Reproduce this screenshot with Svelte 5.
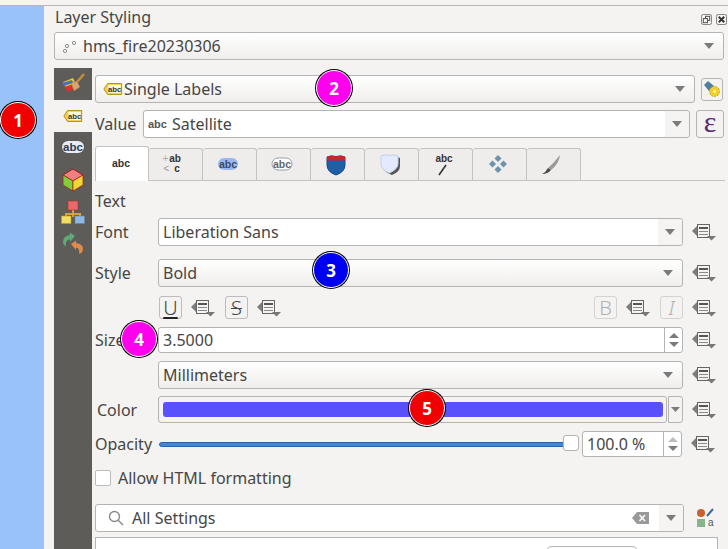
<script>
  const tabs = ['text', 'format', 'buffer', 'mask', 'background', 'shadow', 'callout', 'placement', 'rendering'];
  const badges = [
    { n: 1, x: 18, y: 120, color: '#f00000' },
    { n: 2, x: 334, y: 88, color: '#ff00ee' },
    { n: 3, x: 331, y: 270, color: '#0000f0' },
    { n: 4, x: 139, y: 339, color: '#ff00ee' },
    { n: 5, x: 427, y: 408, color: '#f00000' }
  ];
</script>

{#snippet dd()}
  <svg class="dd" width="24" height="18" viewBox="0 0 24 18">
    <path d="M0 8 L6 2 V14 Z" fill="#7d7d7d" />
    <rect x="5.5" y="1.5" width="12" height="13" fill="#f4f3f1" stroke="#666" />
    <rect x="7" y="4" width="9" height="2" fill="#555" />
    <path d="M7 8.5 H16 M7 11.5 H16" stroke="#8a8a8a" />
    <path d="M15 13 H24 L19.5 17.5 Z" fill="#777" />
  </svg>
{/snippet}

{#snippet arrow()}
  <svg class="arrow" width="10" height="6" viewBox="0 0 10 6"><path d="M0 0 H10 L5 6 Z" fill="#7b7b7b" /></svg>
{/snippet}

{#snippet tag()}
  <svg width="20" height="14" viewBox="0 0 22 15">
    <path d="M5 1.5 H20.5 V13.5 H5 L1 7.5 Z" fill="#f3d34a" stroke="#a98a10" />
    <rect x="6" y="3" width="13.5" height="9" fill="#fff8d8" />
    <text x="12.7" y="10.5" class="ic-abc" font-size="8.5">abc</text>
  </svg>
{/snippet}

{#snippet tabIcon(name)}
  <svg width="30" height="26" viewBox="0 0 30 26">
    {#if name === 'text'}
      <text x="15" y="17" class="ic-abc" font-size="10.5">abc</text>
    {:else if name === 'format'}
      <text x="3.5" y="11" fill="#aaa" font-size="10" font-family="Liberation Sans">+</text>
      <text x="16" y="11" class="ic-abc" font-size="10">ab</text>
      <text x="4.5" y="21" fill="#999" font-size="10" font-family="Liberation Sans">&lt;</text>
      <text x="18" y="21" class="ic-abc" font-size="10">c</text>
    {:else if name === 'buffer'}
      <rect x="5" y="7" width="20" height="12" rx="6" fill="#9db8f0" />
      <text x="15" y="17" class="ic-abc" font-size="10.5" style="fill:#3b4a66">abc</text>
    {:else if name === 'mask'}
      <rect x="5" y="7" width="20" height="12" rx="6" fill="#fff" stroke="#9a9fae" />
      <text x="15" y="17" class="ic-abc" font-size="10.5" style="fill:#666">abc</text>
    {:else if name === 'background'}
      <path d="M6 6 Q10 4 15 5.5 Q20 4 24 6 V14 Q24 21 15 24 Q6 21 6 14 Z" fill="#1f5fa8" stroke="#174a85" />
      <path d="M6 6 Q10 4 15 5.5 Q20 4 24 6 V9.5 H6 Z" fill="#d42027" />
    {:else if name === 'shadow'}
      <path d="M8 7 Q12 5 16 6.5 Q20 5 25 7 V15 Q25 21 17 24 Q8 21 8 15 Z" fill="#555" />
      <path d="M6 5 Q10 3 14.5 4.5 Q19 3 23 5 V13 Q23 18 14.5 22 Q6 19 6 13 Z" fill="#e4eaff" stroke="#c4cfee" />
    {:else if name === 'callout'}
      <text x="15" y="11" class="ic-abc" font-size="10">abc</text>
      <path d="M17 14 L10 24" stroke="#333" stroke-width="1.6" />
    {:else if name === 'placement'}
      <g fill="#6b93ad">
        <path d="M15 4 L18.5 7.5 L15 11 L11.5 7.5 Z" />
        <path d="M15 15 L18.5 18.5 L15 22 L11.5 18.5 Z" />
        <path d="M9.5 9.5 L13 13 L9.5 16.5 L6 13 Z" />
        <path d="M20.5 9.5 L24 13 L20.5 16.5 L17 13 Z" />
      </g>
    {:else}
      <path d="M23 4 Q22 13 14 19 L11 17 Q17 12 23 4 Z" fill="#9a9a9a" />
      <path d="M11 17 L14 19 Q11 23 5 23 Q9 21 11 17 Z" fill="#4a4a4a" />
    {/if}
  </svg>
{/snippet}

<div class="top"></div>
<div class="shell">
  <div class="blue"></div>
  <div class="dock">
    <div class="head">
      <span>Layer Styling</span>
      <div class="winbtns">
        <svg width="11" height="11" viewBox="0 0 12 12"><rect x=".5" y=".5" width="11" height="11" rx="2" fill="none" stroke="#777" /><rect x="5" y="2.5" width="4.5" height="4.5" fill="none" stroke="#444" /><rect x="2.5" y="5" width="4.5" height="4.5" fill="#f4f3f1" stroke="#444" /></svg>
        <svg width="11" height="11" viewBox="0 0 12 12"><rect x=".5" y=".5" width="11" height="11" rx="2" fill="none" stroke="#777" /><path d="M3 3 L9 9 M9 3 L3 9" stroke="#333" stroke-width="2" /></svg>
      </div>
    </div>

    <div class="combo layer">
      <svg width="16" height="16" viewBox="0 0 16 16" fill="#fff" stroke="#8a8a8a"><circle cx="3" cy="13" r="1.6" /><circle cx="5" cy="8" r="1.6" /><circle cx="12" cy="5" r="1.6" /></svg>
      <span>hms_fire20230306</span>
      <span class="grow"></span>
      {@render arrow()}
    </div>

    <div class="body">
      <div class="side">
        <div class="sideitem">
          <svg width="24" height="24" viewBox="0 0 24 24">
            <path d="M2 10 L12 6 L15 12 L5 16 Z" fill="#e8c832" />
            <path d="M1 11 L11 8 L12 11 L3 14 Z" fill="#4a6fc0" />
            <path d="M3 15 L13 12 L15 16 L7 20 Z" fill="#d8342c" />
            <path d="M10 11 L16 9 L19 15 L13 19 Z" fill="#d6a774" stroke="#96703f" stroke-width=".6" />
            <path d="M16 10 L23 2" stroke="#c98f2e" stroke-width="2.4" />
          </svg>
        </div>
        <div class="sideitem on">{@render tag()}</div>
        <div class="sideitem">
          <svg width="24" height="16" viewBox="0 0 24 16">
            <rect x="1" y="2" width="22" height="12" rx="6" fill="#e8ecf8" />
            <text x="12" y="12" class="ic-abc" font-size="11.5" style="fill:#2d3a52">abc</text>
          </svg>
        </div>
        <div class="sideitem">
          <svg width="22" height="24" viewBox="0 0 22 24">
            <path d="M11 1 L21 7 L11 13 L1 7 Z" fill="#f08080" stroke="#a81818" />
            <path d="M1 7 L11 13 V23 L1 17 Z" fill="#7fd038" stroke="#a81818" stroke-width=".7" />
            <path d="M21 7 L11 13 V23 L21 17 Z" fill="#f2d635" stroke="#a81818" stroke-width=".7" />
          </svg>
        </div>
        <div class="sideitem">
          <svg width="24" height="24" viewBox="0 0 24 24">
            <path d="M12 10 V15 M5 17 V14 H19 V17 M12 14 V17" stroke="#d8a040" stroke-width="2" fill="none" />
            <rect x="7" y="1" width="10" height="9" fill="#e86a6a" stroke="#b03030" stroke-width=".6" />
            <rect x="0.5" y="16" width="9.5" height="7.5" fill="#f3dc66" stroke="#b89a20" stroke-width=".6" />
            <rect x="14" y="16" width="9.5" height="7.5" fill="#90b8e0" stroke="#6088b0" stroke-width=".6" />
          </svg>
        </div>
        <div class="sideitem">
          <svg width="22" height="22" viewBox="0 0 22 22">
            <path d="M13 4 L8 0.5 V3 Q1 4 1 10 Q1 13 4 14 Q3 8 8 7.5 V10 Z" fill="#62a878" />
            <path d="M9 12 L14 8.5 V11 Q21 12 21 17 Q21 21 17 22 Q18 16 14 15.5 V18 Z" fill="#e08a4a" />
          </svg>
        </div>
      </div>

      <div class="main">
        <div class="row">
          <div class="combo mode">
            {@render tag()}
            <span>Single Labels</span>
            <span class="grow"></span>
            {@render arrow()}
          </div>
          <button class="tool" aria-label="Rule settings">
            <svg width="18" height="18" viewBox="0 0 18 18">
              <path d="M5 1 L11 6 L6 11 L1 5 Z" fill="#4f7fa0" />
              <circle cx="11.5" cy="11.5" r="5" fill="#f1cf2d" stroke="#caa418" stroke-dasharray="2 1" />
              <circle cx="11.5" cy="11.5" r="1.6" fill="#fff1a0" />
            </svg>
          </button>
        </div>

        <div class="row value">
          <span class="vlabel">Value</span>
          <div class="field vfield">
            <span class="abc">abc</span>
            <span>Satellite</span>
            <span class="grow"></span>
            <span class="dropseg">{@render arrow()}</span>
          </div>
          <button class="tool eps">ε</button>
        </div>

        <div class="tabs">
          {#each tabs as t, i}
            <div class="tab" class:active={i === 0}>{@render tabIcon(t)}</div>
          {/each}
        </div>

        <div class="heading">Text</div>

        <div class="frow font">
          <span class="lbl">Font</span>
          <div class="field ctl h28"><span>Liberation Sans</span><span class="grow"></span><span class="dropseg">{@render arrow()}</span></div>
          {@render dd()}
        </div>

        <div class="frow style">
          <span class="lbl">Style</span>
          <div class="combo ctl h28"><span>Bold</span><span class="grow"></span>{@render arrow()}</div>
          {@render dd()}
        </div>

        <div class="frow fmt">
          <span class="lbl"></span>
          <button class="fbtn u"><span>U</span></button>
          {@render dd()}
          <button class="fbtn s">S</button>
          {@render dd()}
          <span class="grow"></span>
          <button class="fbtn off">B</button>
          {@render dd()}
          <button class="fbtn off it">I</button>
          {@render dd()}
        </div>

        <div class="frow size">
          <span class="lbl">Size</span>
          <div class="field ctl h26">
            <span>3.5000</span><span class="grow"></span>
            <span class="spin">
              <svg width="10" height="5" viewBox="0 0 10 5"><path d="M0 5 H10 L5 0 Z" fill="#7b7b7b" /></svg>
              <svg width="10" height="5" viewBox="0 0 10 5"><path d="M0 0 H10 L5 5 Z" fill="#7b7b7b" /></svg>
            </span>
          </div>
          {@render dd()}
        </div>

        <div class="frow unit">
          <span class="lbl"></span>
          <div class="combo ctl h28"><span>Millimeters</span><span class="grow"></span>{@render arrow()}</div>
          {@render dd()}
        </div>

        <div class="frow color">
          <span class="lbl colorlbl">Color</span>
          <div class="colorbtn"><div class="swatch"></div></div>
          <div class="colordrop"><svg width="9" height="5" viewBox="0 0 9 5"><path d="M0 0 H9 L4.5 5 Z" fill="#7b7b7b" /></svg></div>
          {@render dd()}
        </div>

        <div class="frow opacity">
          <span class="lbl">Opacity</span>
          <div class="slider"><div class="track"></div><div class="handle"></div></div>
          <div class="field pct">
            <span>100.0 %</span><span class="grow"></span>
            <span class="spin">
              <svg width="10" height="5" viewBox="0 0 10 5"><path d="M0 5 H10 L5 0 Z" fill="#bdbdbd" /></svg>
              <svg width="10" height="5" viewBox="0 0 10 5"><path d="M0 0 H10 L5 5 Z" fill="#7b7b7b" /></svg>
            </span>
          </div>
          {@render dd()}
        </div>

        <div class="check">
          <span class="box"></span>
          <span>Allow HTML formatting</span>
        </div>

        <div class="row search">
          <div class="field sfield">
            <svg width="16" height="16" viewBox="0 0 16 16" fill="none" stroke="#8a8a8a" stroke-width="1.4"><circle cx="6.5" cy="6.5" r="5" /><path d="M10.2 10.2 L15 15" /></svg>
            <span>All Settings</span>
            <span class="grow"></span>
            <svg class="clear" width="17" height="12" viewBox="0 0 17 12"><path d="M0 6 L5 0 H17 V12 H5 Z" fill="#9a9a9a" /><path d="M7.5 3 L13 9 M13 3 L7.5 9" stroke="#fff" stroke-width="1.5" /></svg>
            <span class="dropseg">{@render arrow()}</span>
          </div>
          <svg class="styleic" width="20" height="22" viewBox="0 0 20 22">
            <circle cx="6" cy="6" r="4" fill="#c9622c" />
            <path d="M12 9 L18 2" stroke="#3e6a9e" stroke-width="2" />
            <rect x="2" y="12" width="8" height="8" fill="#88b48c" />
            <text x="13" y="19" fill="#555" font-size="10" font-family="Liberation Sans">a</text>
          </svg>
        </div>

        <div class="bottombox"><div class="pill"></div></div>
      </div>
    </div>
  </div>
</div>

{#each badges as b}
  <div class="badge" style="left:{b.x - 18}px;top:{b.y - 18}px;background:{b.color}">{b.n}</div>
{/each}

<style>
  :global(body) {
    margin: 0;
    background: #f4f3f1;
    overflow: hidden;
    font-family: 'Noto Sans', 'Open Sans', sans-serif;
    font-size: 16px;
    color: #464646;
  }

  .top {
    height: 5px;
    border-bottom: 1px solid #b8b7b5;
  }

  .shell {
    display: flex;
    height: 543px;
    overflow: hidden;
  }

  .blue {
    width: 44px;
    flex: none;
    background: #99c2fb;
  }

  .dock {
    flex: 1;
    padding-left: 10px;
    min-width: 0;
  }

  .head {
    height: 26px;
    display: flex;
    align-items: center;
    justify-content: space-between;
    padding: 0 1px 4px 1px;
    box-sizing: border-box;
  }

  .winbtns {
    display: flex;
    gap: 4px;
    margin-top: 4px;
  }

  .combo,
  .field {
    display: flex;
    align-items: center;
    box-sizing: border-box;
    border: 1px solid #b5b4b2;
    border-radius: 3px;
    padding-left: 7px;
    gap: 5px;
  }

  .combo {
    background: linear-gradient(#fff, #efeeec);
    padding-right: 9px;
  }

  .field {
    background: #fff;
  }

  .grow {
    flex: 1;
  }

  .arrow {
    flex: none;
  }

  .dropseg {
    align-self: stretch;
    display: flex;
    align-items: center;
    justify-content: center;
    width: 24px;
    background: #f5f4f2;
    border-radius: 0 3px 3px 0;
  }

  .layer {
    width: 670px;
    height: 28px;
  }

  .body {
    display: flex;
    margin-top: 8px;
  }

  .side {
    width: 38px;
    flex: none;
    height: 481px;
    background: #5d5c58;
  }

  .sideitem {
    display: flex;
    align-items: center;
    justify-content: center;
  }

  .sideitem:nth-child(1) {
    height: 32px;
  }

  .sideitem.on {
    height: 32px;
    background: #f4f3f1;
  }

  .sideitem:nth-child(3) {
    height: 30px;
  }

  .sideitem:nth-child(4) {
    height: 36px;
  }

  .sideitem:nth-child(5) {
    height: 28px;
  }

  .sideitem:nth-child(6) {
    height: 34px;
  }

  .main {
    padding: 7px 0 0 3px;
    width: 633px;
    box-sizing: border-box;
  }

  .row {
    display: flex;
    align-items: center;
  }

  .mode {
    width: 600px;
    height: 28px;
    gap: 1px;
  }

  .tool {
    margin-left: 6px;
    width: 22px;
    height: 23px;
    padding: 0;
    display: flex;
    align-items: center;
    justify-content: center;
    background: #f4f3f1;
    border: 1px solid #b5b4b2;
    border-radius: 3px;
  }

  .value {
    margin-top: 7px;
  }

  .vlabel {
    width: 48px;
  }

  .vfield {
    width: 547px;
    height: 28px;
    padding-left: 4px;
  }

  .abc {
    font-family: 'Liberation Sans', sans-serif;
    font-weight: 700;
    font-size: 11px;
    color: #555;
  }

  .eps {
    width: 28px;
    height: 28px;
    margin-left: 6px;
    font-family: 'Liberation Serif', serif;
    font-size: 30px;
    color: #5b2a72;
    line-height: 22px;
    padding-bottom: 4px;
  }

  .tabs {
    display: flex;
    margin-top: 8px;
    height: 34px;
    border-bottom: 1px solid #c4c3c1;
    box-sizing: content-box;
  }

  .tab {
    width: 54px;
    height: 32px;
    margin-top: 2px;
    padding: 0 3px 2px 0;
    box-sizing: border-box;
    background: #eeedeb;
    border: 1px solid #c4c3c1;
    border-left: 0;
    border-bottom: 0;
    border-radius: 3px 3px 0 0;
    display: flex;
    align-items: center;
    justify-content: center;
  }

  .tab.active {
    height: 35px;
    margin-top: 0;
    padding-bottom: 3px;
    background: #fff;
    border-left: 1px solid #c4c3c1;
    z-index: 1;
  }

  .ic-abc {
    font-family: 'Liberation Sans', sans-serif;
    font-weight: 700;
    text-anchor: middle;
    fill: #333;
  }

  .heading {
    height: 37px;
    display: flex;
    align-items: center;
    padding-top: 2px;
    box-sizing: border-box;
  }

  .frow {
    display: flex;
    align-items: center;
  }

  .lbl {
    width: 63px;
    flex: none;
  }

  .ctl {
    width: 525px;
    flex: none;
  }

  .h28 {
    height: 28px;
    padding-left: 4px;
  }

  .h26 {
    height: 26px;
    padding-left: 4px;
  }

  .dd {
    flex: none;
    margin-left: 9px;
  }

  .style {
    margin-top: 13px;
  }

  .fmt {
    margin-top: 9px;
    height: 23px;
    width: 621px;
  }

  .fbtn {
    width: 23px;
    height: 23px;
    padding: 0;
    box-sizing: border-box;
    flex: none;
    background: #f4f3f1;
    border: 1px solid #bdbcba;
    border-radius: 3px;
    font-family: 'Noto Sans', sans-serif;
    font-size: 20px;
    font-weight: 300;
    color: #464646;
    line-height: 1;
  }

  .fbtn.u {
    margin-left: 1px;
  }

  .fbtn.u span {
    text-decoration: underline;
    text-decoration-thickness: 2px;
    text-underline-offset: 2px;
    text-decoration-color: #222;
  }

  .fbtn.s {
    margin-left: 10px;
    text-decoration: line-through;
    text-decoration-thickness: 1px;
  }

  .fbtn.off {
    color: #b0b0b0;
    border-color: #d4d3d1;
    margin-left: 10px;
  }

  .fbtn.it {
    font-style: italic;
  }

  .size {
    margin-top: 8px;
  }

  .spin {
    align-self: stretch;
    width: 18px;
    box-sizing: border-box;
    border-left: 1px solid #b5b4b2;
    display: flex;
    flex-direction: column;
    align-items: center;
    justify-content: center;
    gap: 4px;
  }

  .unit {
    margin-top: 8px;
  }

  .color {
    margin-top: 7px;
  }

  .colorlbl {
    padding-left: 2px;
    box-sizing: border-box;
  }

  .colorbtn {
    width: 509px;
    height: 27px;
    flex: none;
    box-sizing: border-box;
    border: 1px solid #b5b4b2;
    border-radius: 3px;
    background: #f4f3f1;
    padding: 5px 3px 5px 4px;
  }

  .swatch {
    height: 100%;
    background: #5a50fb;
    border-radius: 3px;
  }

  .colordrop {
    width: 15px;
    height: 27px;
    margin-left: 1px;
    flex: none;
    box-sizing: border-box;
    border: 1px solid #b5b4b2;
    border-radius: 0 3px 3px 0;
    display: flex;
    align-items: center;
    justify-content: center;
  }

  .opacity {
    margin-top: 8px;
  }

  .slider {
    position: relative;
    width: 420px;
    margin-left: 1px;
    height: 26px;
    flex: none;
    display: flex;
    align-items: center;
  }

  .track {
    width: 100%;
    height: 5px;
    background: #3f87dd;
    border: 1px solid #2c62a8;
    border-radius: 3px;
    box-sizing: border-box;
  }

  .handle {
    position: absolute;
    right: 0;
    top: 4px;
    width: 16px;
    height: 16px;
    background: #fff;
    border: 1px solid #b5b4b2;
    border-radius: 3px;
    box-sizing: border-box;
  }

  .pct {
    width: 100px;
    height: 26px;
    margin-left: 3px;
    padding-left: 4px;
    flex: none;
  }

  .check {
    display: flex;
    align-items: center;
    gap: 7px;
    margin-top: 12px;
    height: 18px;
  }

  .box {
    width: 16px;
    height: 16px;
    background: #fff;
    border: 1px solid #bdbcba;
    border-radius: 2px;
    box-sizing: border-box;
  }

  .search {
    margin-top: 17px;
  }

  .sfield {
    width: 589px;
    height: 28px;
    padding-left: 12px;
    gap: 8px;
  }

  .clear {
    margin-right: 2px;
  }

  .styleic {
    margin-left: 11px;
  }

  .bottombox {
    margin-top: 5px;
    width: 623px;
    height: 30px;
    border: 1px solid #b5b4b2;
    background: #fff;
    box-sizing: border-box;
    padding: 8px 0 0 451px;
  }

  .pill {
    width: 90px;
    height: 24px;
    border: 1px solid #b5b4b2;
    border-radius: 4px;
    box-sizing: border-box;
  }

  .badge {
    position: absolute;
    width: 36px;
    height: 36px;
    box-sizing: border-box;
    border-radius: 50%;
    border: 1.5px solid #fff;
    box-shadow: 0 0 0 1px #000;
    display: flex;
    align-items: center;
    justify-content: center;
    color: #fff;
    font-family: 'Noto Sans', sans-serif;
    font-weight: 700;
    font-size: 17px;
  }
</style>
